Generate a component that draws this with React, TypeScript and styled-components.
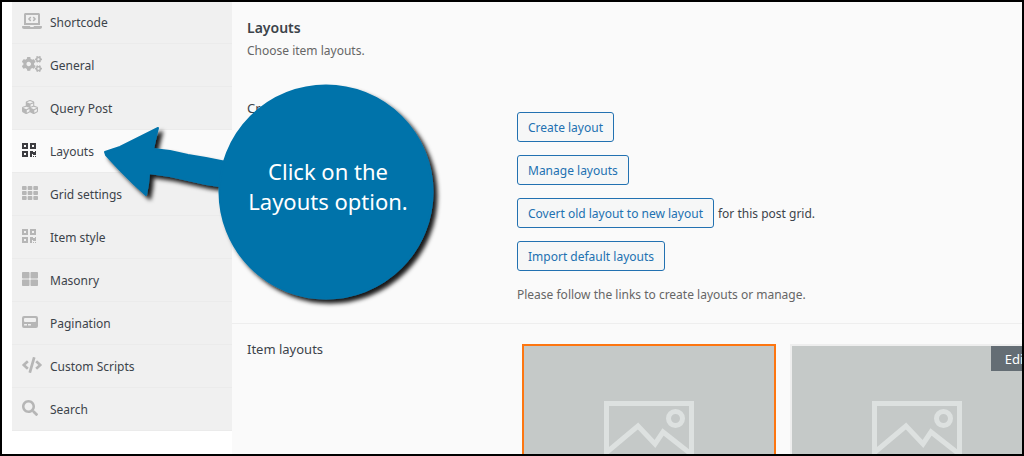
import React from "react";
import styled, { createGlobalStyle } from "styled-components";
import type { IconType } from "react-icons";
import {
  FaCode,
  FaCogs,
  FaCubes,
  FaLaptopCode,
  FaPager,
  FaQrcode,
  FaSearch,
  FaTh,
  FaThLarge,
} from "react-icons/fa";

const GlobalStyle = createGlobalStyle`
  *, *::before, *::after { box-sizing: border-box; }
  body {
    margin: 0;
    background: #fff;
    color: #3c434a;
    font-family: "Noto Sans", "Open Sans", sans-serif;
    font-size: 12px;
    line-height: 20px;
  }
`;

const Frame = styled.div`
  position: relative;
  display: flex;
  height: 100vh;
  padding-left: 10px;
  overflow: hidden;
  border: 2px solid #000;
  background: #fff;
`;

const Sidebar = styled.nav`
  flex: 0 0 220px;
`;

const TabList = styled.ul`
  margin: -1px 0 0;
  padding: 0;
  list-style: none;
`;

const Tab = styled.a<{ $active?: boolean }>`
  display: flex;
  align-items: center;
  gap: 8px;
  height: 43px;
  padding: 2px 10px 0;
  border-bottom: 1px solid #ebebeb;
  background: ${(p) => (p.$active ? "#fafafa" : "#f0f0f0")};
  color: #3c434a;
  text-decoration: none;
`;

const TabIcon = styled.span<{ $active?: boolean; $width: number }>`
  display: flex;
  width: 20px;
  padding-bottom: 4px;
  color: ${(p) => (p.$active ? "#3c3c40" : "#b6b6b6")};

  svg {
    width: ${(p) => p.$width}px;
    height: 16px;
  }
`;

const Panel = styled.main`
  flex: 1;
  min-width: 0;
  background: #fafafa;
`;

const PanelHeader = styled.header`
  display: grid;
  gap: 2px;
  padding: 15px 15px 0;
`;

const Title = styled.h1`
  margin: 0;
  color: #3c434a;
  font-size: 14px;
  font-weight: 600;
  line-height: 22px;
`;

const Note = styled.p`
  margin: 0;
  color: #666;
`;

const Setting = styled.section`
  display: grid;
  grid-template-columns: 270px 1fr;
  padding: 15px;
  border-bottom: 1px solid #eee;
`;

const FirstSetting = styled(Setting)`
  margin-top: 22px;
  padding-bottom: 18px;
`;

const SettingTitle = styled.h2`
  margin: 0;
  font-size: 13px;
  font-weight: 400;
`;

const Actions = styled.div`
  display: flex;
  flex-direction: column;
  gap: 13px;
  margin: 14px 0;
`;

const ActionLine = styled.div`
  display: flex;
  align-items: baseline;
  gap: 4px;
`;

const Button = styled.button`
  height: 30px;
  padding: 1px 10px 0;
  border: 1px solid #2271b1;
  border-radius: 3px;
  background: #f6f7f7;
  color: #2271b1;
  font: inherit;
  white-space: nowrap;
`;

const Cards = styled.div`
  display: flex;
  gap: 14px;
  padding: 5px;
`;

const Card = styled.div<{ $selected?: boolean }>`
  position: relative;
  display: flex;
  flex: 0 0 254px;
  align-items: center;
  justify-content: center;
  height: 184px;
  border: 2px solid ${(p) => (p.$selected ? "#fd7611" : "#eee")};
  background: #c5c9c8;
`;

const EditLink = styled.a`
  position: absolute;
  top: 0;
  right: 0;
  padding: 3px 14px 2px;
  background: #646d74;
  color: #fff;
  font-size: 13px;
  text-decoration: none;
`;

const Callout = styled.aside`
  position: absolute;
  top: 78px;
  left: 98px;
  width: 350px;
  height: 230px;
`;

const CalloutShape = styled.svg`
  position: absolute;
  inset: 0;
  width: 100%;
  height: 100%;
`;

const CalloutText = styled.p`
  position: relative;
  margin: 0;
  padding: 76px 24px 0 130px;
  color: #fff;
  font-size: 22px;
  line-height: 30px;
  text-align: center;
`;

const tabs: { label: string; icon: IconType; iconWidth: number; active?: boolean }[] = [
  { label: "Shortcode", icon: FaLaptopCode, iconWidth: 20 },
  { label: "General", icon: FaCogs, iconWidth: 20 },
  { label: "Query Post", icon: FaCubes, iconWidth: 16 },
  { label: "Layouts", icon: FaQrcode, iconWidth: 14, active: true },
  { label: "Grid settings", icon: FaTh, iconWidth: 16 },
  { label: "Item style", icon: FaQrcode, iconWidth: 14 },
  { label: "Masonry", icon: FaThLarge, iconWidth: 16 },
  { label: "Pagination", icon: FaPager, iconWidth: 16 },
  { label: "Custom Scripts", icon: FaCode, iconWidth: 20 },
  { label: "Search", icon: FaSearch, iconWidth: 16 },
];

const actions: { label: string; suffix?: string }[] = [
  { label: "Create layout" },
  { label: "Manage layouts" },
  { label: "Covert old layout to new layout", suffix: "for this post grid." },
  { label: "Import default layouts" },
];

function Placeholder() {
  return (
    <svg width="90" height="70" viewBox="0 0 90 70" fill="none" stroke="#dde1e0" strokeWidth="5" aria-hidden="true">
      <path d="M2.5 2.5h85v65h-85z" />
      <path d="M3 51 34 25 51 43 59 31 87 53" />
      <circle cx="71.5" cy="17.5" r="7" />
    </svg>
  );
}

export default function App() {
  return (
    <>
      <GlobalStyle />
      <Frame>
        <Sidebar aria-label="Post grid settings">
          <TabList>
            {tabs.map(({ label, icon: Icon, iconWidth, active }) => (
              <li key={label}>
                <Tab href="#" $active={active} aria-current={active ? "page" : undefined}>
                  <TabIcon $active={active} $width={iconWidth}>
                    <Icon aria-hidden="true" />
                  </TabIcon>
                  {label}
                </Tab>
              </li>
            ))}
          </TabList>
        </Sidebar>
        <Panel>
          <PanelHeader>
            <Title>Layouts</Title>
            <Note>Choose item layouts.</Note>
          </PanelHeader>
          <FirstSetting>
            <SettingTitle>Create layout</SettingTitle>
            <div>
              <Actions>
                {actions.map(({ label, suffix }) => (
                  <ActionLine key={label}>
                    <Button type="button">{label}</Button>
                    {suffix && <span>{suffix}</span>}
                  </ActionLine>
                ))}
              </Actions>
              <Note>Please follow the links to create layouts or manage.</Note>
            </div>
          </FirstSetting>
          <Setting>
            <SettingTitle>Item layouts</SettingTitle>
            <Cards>
              <Card $selected>
                <Placeholder />
              </Card>
              <Card>
                <Placeholder />
                <EditLink href="#">Edit</EditLink>
              </Card>
            </Cards>
          </Setting>
        </Panel>
        <Callout>
          <CalloutShape viewBox="0 0 350 230" aria-hidden="true">
            <defs>
              <filter id="callout-shadow" x="-5%" y="-5%" width="112%" height="112%">
                <feDropShadow dx="4" dy="4" stdDeviation="2" floodColor="#000" floodOpacity="0.9" />
              </filter>
            </defs>
            <g fill="#0073aa" stroke="#0073aa" strokeWidth="2" strokeLinejoin="round" filter="url(#callout-shadow)">
              <path d="M5 72 20 67 34 60 46 54 58 48 56 56 53 69 70 71 88 75 106 78 126 82 126 107 106 104 88 100 70 96 49 93 48 104 46 115 34 104 20 90 6 75Z" />
              <circle cx="226" cy="112" r="106.5" />
            </g>
          </CalloutShape>
          <CalloutText>
            Click on the
            <br />
            Layouts option.
          </CalloutText>
        </Callout>
      </Frame>
    </>
  );
}
